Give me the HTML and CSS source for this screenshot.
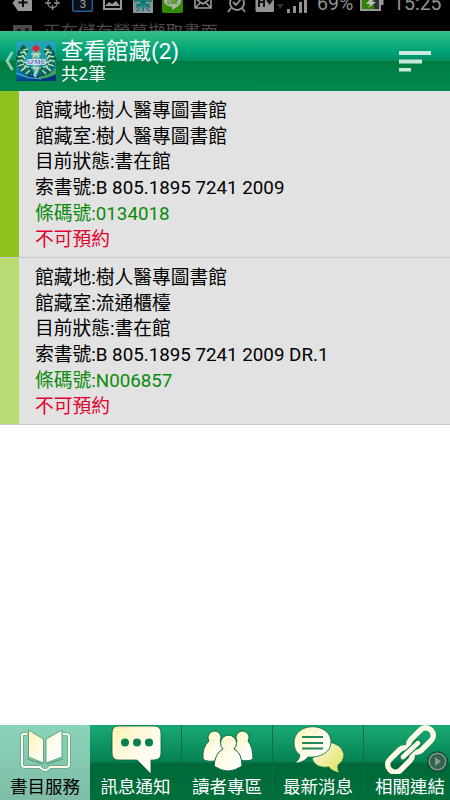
FILE: index.html
```
<!DOCTYPE html>
<html lang="zh-Hant">
<head>
  <meta charset="utf-8">
  <title>查看館藏</title>
  <link rel="stylesheet" href="styles.css">
</head>
<body>
  <div class="status">
    <div class="status-row">
      <svg class="status-icons" width="310" height="14" viewBox="0 0 310 14">
        <path d="M12.500 3L18-4H32V11H18Z" fill="#969696"/>
        <path d="M23-2V7M18.500 2.500H27.500" stroke="#080808" stroke-width="2"/>
        <circle cx="52.500" cy="3" r="4.700" fill="none" stroke="#8c8c8c" stroke-width="1.400"/>
        <path d="M45 3H51M54 3H60M52.500 5V10" stroke="#8c8c8c" stroke-width="1.400"/>
        <rect x="72.700" y="-5" width="19.600" height="16.300" rx="1.500" fill="#0b1018" stroke="#245d93" stroke-width="1.500"/>
        <text x="83" y="8" font-size="11.500" text-anchor="middle" fill="#aaa">3</text>
        <path d="M104-5V9H121V-5" fill="none" stroke="#969696" stroke-width="2"/>
        <path d="M105 6L109 2L112 4L116 1L120 6Z" fill="#969696"/>
        <rect x="133" y="-5" width="20" height="18" fill="#8b9692"/>
        <path d="M134 1H152M143-2V11M142 2L136 8M144 2L150 8M136 4L140 6M150 4L146 6" fill="none" stroke="#007b67" stroke-width="1.500"/>
        <path d="M136 11Q141 9 142 3M150 11Q145 9 144 3" fill="none" stroke="#176fa0" stroke-width="1.300"/>
        <rect x="162" y="-5" width="21" height="18" rx="2" fill="#318b00"/>
        <path d="M164-3H181V2Q180 6 172 10V7Q165 6 164 2Z" fill="#a7b2a1"/>
        <text x="172.500" y="3.500" font-size="5" font-weight="700" text-anchor="middle" fill="#318b00">LINE</text>
        <path d="M195-5V8H211V-5M196-1L203 4L210-1M196 7L201 2M210 7L205 2" fill="none" stroke="#999" stroke-width="1.600"/>
        <circle cx="237" cy="3" r="7" fill="none" stroke="#929292" stroke-width="1.800"/>
        <path d="M233 2L236 5L241-1M231 8L228 12M242 8L245 12" fill="none" stroke="#929292" stroke-width="1.800"/>
        <rect x="255.500" y="-5" width="18.500" height="17" rx="1.500" fill="#929292"/>
        <path d="M259-2V7M264-2V7M259 2H264" fill="none" stroke="#111" stroke-width="2"/>
        <path d="M266 0H273L269.500 5Z" fill="#111"/>
        <path d="M277 4H284L280 9Z" fill="#303030"/>
        <path d="M287 9H290V13H287ZM293 6H296V13H293ZM299 2H302V13H299ZM304-3H307V13H304Z" fill="#929292"/>
      </svg>
      <span class="percent">69%</span>
      <svg class="battery" width="24" height="14" viewBox="0 0 24 14">
        <path d="M0-4H21V11H0Z" fill="#999"/>
        <path d="M21 0H23.500V5H21Z" fill="#999"/>
        <path d="M2-4H14V9H2Z" fill="#318000"/>
        <path d="M14-4H19V9H14Z" fill="#302d33"/>
        <path d="M11-2L6 4H10L8 8L16 2H12L14-2Z" fill="#bbb"/>
      </svg>
      <span class="clock">15:25</span>
    </div>
    <div class="notice">
      <svg width="19" height="6" viewBox="0 0 19 6">
        <path d="M0 0H19V6H0Z" fill="#4b4b4b"/>
        <path d="M3 6L6 3L9 6M12 3H16V6H12Z" fill="#1d1d1d"/>
      </svg>
      <span>正在儲存螢幕擷取畫面</span>
    </div>
  </div>

  <div class="header">
    <svg class="back" width="9" height="20" viewBox="0 0 9 20">
      <path d="M7.500 1L2 10L7.500 19" fill="none" stroke="#91ceb5" stroke-width="2.800"/>
    </svg>
    <svg class="logo" width="40" height="40" viewBox="0 0 40 40">
      <defs>
        <linearGradient id="logo-bg" x1="0" y1="0" x2="0" y2="1">
          <stop offset="0" stop-color="#25a4b7"/>
          <stop offset=".55" stop-color="#189ba4"/>
          <stop offset=".8" stop-color="#0874aa"/>
          <stop offset="1" stop-color="#043d89"/>
        </linearGradient>
      </defs>
      <rect width="40" height="40" fill="url(#logo-bg)"/>
      <path d="M12 35Q28 36 40 28V40H20Z" fill="#06317d"/>
      <path d="M22 36Q34 34 40 27V33Q33 37 24 38Z" fill="#3aa35a"/>
      <path d="M0 32Q12 38 25 38" fill="none" stroke="#55c1de"/>
      <g fill="none" stroke="#0b5a42" stroke-width="8">
        <path d="M10 7C1 14 1 28 17 32" stroke-dasharray="4.500 1"/>
        <path d="M30 7C39 14 39 28 23 32" stroke-dasharray="4.500 1"/>
      </g>
      <g fill="none" stroke="#b3dcb4" stroke-width="1.700">
        <path d="M12 8L7 9M9 11L4 12M8 15L2 16M7 19L1 20M8 23L2 25M10 26L5 30M14 29L10 33"/>
        <path d="M28 8L33 9M31 11L36 12M32 15L38 16M33 19L39 20M32 23L38 25M30 26L35 30M26 29L30 33"/>
        <path d="M8 10L10 14M6 14L9 18M6 20L10 22M8 25L13 26M32 10L30 14M34 14L31 18M34 20L30 22M32 25L27 26"/>
      </g>
      <path d="M16 11Q20 8 24 11L23 28L20 37L17 28Z" fill="#75b8a0"/>
      <path d="M15 13H25M17 16Q20 11 23 16M15 27H25M17 26Q24 28 20 31T20 36" fill="none" stroke="#cae8d2" stroke-width="1.200"/>
      <text x="20" y="22.500" font-family="Liberation Serif" font-size="7" font-weight="700" text-anchor="middle" textLength="19" fill="#5264ae" stroke="#e5ecf5" stroke-width="1.400" paint-order="stroke">SZMC</text>
      <path d="M18.500 4H21.500V6H23.500V9H21.500V11H18.500V9H16.500V6H18.500Z" fill="#e81e32"/>
    </svg>
    <div class="titles">
      <div class="title">查看館藏(2)</div>
      <div class="subtitle">共2筆</div>
    </div>
    <svg class="sort" width="32" height="21" viewBox="0 0 32 21">
      <path d="M0 0H32V4H0ZM0 8.500H23V12.500H0ZM0 17H12V20.500H0Z" fill="#cbe9dd"/>
    </svg>
  </div>

  <div class="list">
    <div class="item">
      <div>館藏地:樹人醫專圖書館</div>
      <div>館藏室:樹人醫專圖書館</div>
      <div>目前狀態:書在館</div>
      <div>索書號:B 805.1895 7241 2009</div>
      <div class="barcode">條碼號:0134018</div>
      <div class="no-reserve">不可預約</div>
    </div>
    <div class="item light">
      <div>館藏地:樹人醫專圖書館</div>
      <div>館藏室:流通櫃檯</div>
      <div>目前狀態:書在館</div>
      <div>索書號:B 805.1895 7241 2009 DR.1</div>
      <div class="barcode">條碼號:N006857</div>
      <div class="no-reserve">不可預約</div>
    </div>
  </div>

  <div class="tabs">
    <div class="tab active">
      <svg width="90" height="49" viewBox="0 0 90 49">
        <defs>
          <linearGradient id="cream" x1="0" y1="0" x2="1" y2="1">
            <stop offset="0" stop-color="#fff2b2"/>
            <stop offset=".6" stop-color="#fffdf0"/>
            <stop offset="1" stop-color="#fff"/>
          </linearGradient>
          <linearGradient id="yellow" x1="0" y1="0" x2="1" y2="1">
            <stop offset="0" stop-color="#fffce9"/>
            <stop offset="1" stop-color="#dddf55"/>
          </linearGradient>
        </defs>
        <path d="M27 9H23Q22 9 22 11V40Q22 42 25 42H40Q42 45 45 45Q48 45 50 42H66Q69 42 69 40V10Q69 9 63 9" fill="none" stroke="#62a88c" stroke-width="3.600"/>
        <path d="M27 9H23Q22 9 22 11V40Q22 42 25 42H40Q42 45 45 45Q48 45 50 42H66Q69 42 69 40V10Q69 9 63 9" fill="none" stroke="#fffce7" stroke-width="2"/>
        <path d="M28.500 5L43.500 14V38L28.500 32ZM62 5L46 14V38L62 32Z" fill="url(#cream)" stroke="#519a7c" stroke-width=".9"/>
        <path d="M27 34L43 39M63 34L47 39" stroke="#519a7c" fill="none"/>
      </svg>
      <span>書目服務</span>
    </div>
    <div class="tab">
      <svg width="90" height="49" viewBox="0 0 90 49">
        <path d="M28 1H64Q71 1 71 8V28Q71 35 64 35H61V49L47 35H28Q22 35 22 28V8Q22 1 28 1Z" fill="url(#cream)" stroke="#075b39" stroke-width=".8"/>
        <circle cx="35" cy="17.500" r="4" fill="#087f50"/>
        <circle cx="47" cy="17.500" r="4" fill="#087f50"/>
        <circle cx="59" cy="17.500" r="4" fill="#087f50"/>
      </svg>
      <span>訊息通知</span>
    </div>
    <div class="tab">
      <svg width="90" height="49" viewBox="0 0 90 49">
        <g fill="url(#cream)" stroke="#086b43" stroke-width="1">
          <path d="M27 16A6.500 6.500 0 1 1 38 16Q43 20 41 35Q24 38 21 34Q20 22 27 16Z"/>
          <path d="M55 16A6.500 6.500 0 1 1 66 16Q71 22 71 34Q68 37 53 35Q50 20 55 16Z"/>
          <path d="M41 24A8 8 0 1 1 52 24Q60 28 60 41Q46 51 32 41Q33 28 41 24Z"/>
        </g>
      </svg>
      <span>讀者專區</span>
    </div>
    <div class="tab">
      <svg width="90" height="49" viewBox="0 0 90 49">
        <path d="M54 17Q68 18 71 29Q71 36 65 40Q64 45 67 48Q58 46 56 42Q43 44 39 34Z" fill="url(#yellow)" stroke="#086b43" stroke-width=".8"/>
        <path d="M21 18C21-4 58-3 58 17C58 28 46 33 35 32Q30 38 22 38Q27 34 27 30Q21 26 21 18Z" fill="url(#cream)" stroke="#086b43" stroke-width=".8"/>
        <path d="M29 12H50M29 18H50M29 23.500H50" stroke="#23885d" stroke-width="2.200"/>
      </svg>
      <span>最新消息</span>
    </div>
    <div class="tab">
      <svg width="86" height="49" viewBox="0 0 86 49">
        <g fill="none" stroke="#fffbe4" stroke-width="5.400">
          <rect x="-14" y="-7.500" width="28" height="15" rx="7" transform="translate(57 15) rotate(-45)"/>
          <rect x="-14" y="-7.500" width="28" height="15" rx="7" transform="translate(36 35) rotate(-45)"/>
        </g>
        <path d="M39 32L54 18" stroke="#087442" stroke-width="7" stroke-linecap="round"/>
        <path d="M39 32L54 18" stroke="#fffbea" stroke-width="4.800" stroke-linecap="round"/>
      </svg>
      <span>相關連結</span>
      <svg class="next" width="21" height="21" viewBox="0 0 21 21">
        <circle cx="10.500" cy="10.500" r="9.300" fill="#33614e" stroke="#153f2d" stroke-width="2"/>
        <circle cx="10.500" cy="10.500" r="8.300" fill="none" stroke="#7f9f90" stroke-width="1.500"/>
        <path d="M8 6L14 10.500L8 15Z" fill="#829c90"/>
      </svg>
    </div>
  </div>
</body>
</html>
```
FILE: styles.css
```
* {
  box-sizing: border-box;
}

body {
  margin: 0;
  width: 450px;
  height: 800px;
  display: flex;
  flex-direction: column;
  overflow: hidden;
  background: #fff;
  font-family: Roboto, "Noto Sans CJK TC", sans-serif;
  color: #000;
}

svg {
  display: block;
  flex: none;
}

.status {
  height: 31px;
  flex: none;
  overflow: hidden;
  background: #000;
  color: #929292;
}

.status-row {
  display: flex;
  height: 14px;
}

.percent,
.clock {
  font-size: 19.500px;
  line-height: 20px;
  margin-top: -6px;
}

.percent {
  width: 50px;
  padding-left: 7px;
}

.clock {
  margin-left: 9px;
}

.notice {
  display: flex;
  margin-top: 11px;
  padding-left: 13px;
  gap: 11px;
  font-size: 17.500px;
  line-height: 18px;
  color: #4b4b4b;
}

.notice span {
  margin-top: -2px;
}

.header {
  display: flex;
  align-items: flex-start;
  flex: none;
  height: 60px;
  padding-left: 5px;
  background: linear-gradient(#35bf88 0, #00a275 20px, #008e61 30px, #007c40 30px, #008850 100%);
  color: #fff;
}

.back {
  margin-top: 20px;
}

.logo {
  margin: 10px 0 0 2px;
}

.titles {
  margin-left: 5px;
  flex: 1;
}

.title {
  margin-top: 7px;
  font-size: 22.500px;
  line-height: 27px;
}

.subtitle {
  margin-top: -1px;
  font-size: 17.500px;
  line-height: 21px;
}

.sort {
  margin: 20px 19px 0 0;
}

.list {
  flex: 1;
}

.item {
  height: 167px;
  padding: 8px 0 0 35px;
  border-bottom: 1px solid #c9c9c9;
  background: linear-gradient(to right, #8dc21f 19px, #e2e2e2 19px);
  font-size: 18.750px;
  line-height: 25.700px;
}

.light {
  background: linear-gradient(to right, #b9dc75 19px, #e2e2e2 19px);
}

.barcode {
  color: #0b8a0b;
}

.no-reserve {
  color: #e4002f;
}

.tabs {
  display: grid;
  grid-template-columns: 90px 92px 91px 91px 86px;
  height: 75px;
  flex: none;
  background: linear-gradient(#18aa74 0, #068052 37px, #00683a 38px, #006f3a 100%);
  color: #fff;
}

.tab {
  position: relative;
  overflow: hidden;
  border-right: 1px solid #087044;
  font-size: 17.500px;
  line-height: 26px;
  text-align: center;
  white-space: nowrap;
}

.tab span {
  display: block;
}

.active {
  background: linear-gradient(#8bd4b9, #7ebca5);
  border-right: 0;
  color: #000;
}

.tab:last-child {
  border-right: 0;
}

.tab:last-child span {
  padding-left: 6px;
}

.next {
  position: absolute;
  right: 2px;
  top: 26px;
}
```
